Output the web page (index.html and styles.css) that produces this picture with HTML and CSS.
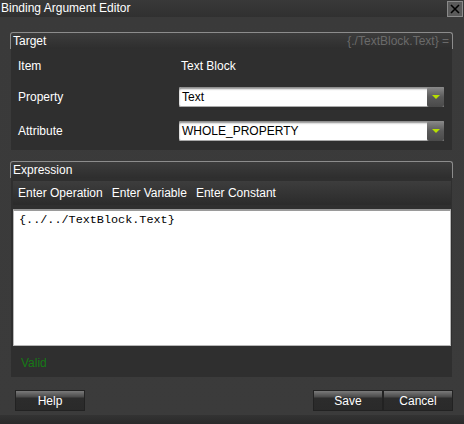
FILE: index.html
```html
<!DOCTYPE html>
<html>
<head>
<meta charset="utf-8">
<link rel="stylesheet" href="styles.css">
</head>
<body>
<div class="window">
  <div class="titlebar">
    <span class="title">Binding Argument Editor</span>
    <span class="close"><svg width="14" height="14" viewBox="0 0 14 14"><path d="M3 3 L11 11 M11 3 L3 11" stroke="#000" stroke-width="1.6" fill="none"/></svg></span>
  </div>
  <div class="content">
    <div class="group target">
      <div class="group-head">
        <span>Target</span>
        <span class="path">{./TextBlock.Text} =</span>
      </div>
      <div class="group-body target-body">
        <div class="row">
          <span class="label">Item</span>
          <span class="value">Text Block</span>
        </div>
        <div class="row">
          <span class="label">Property</span>
          <div class="combo"><span class="combo-text">Text</span><span class="combo-btn"><svg width="10" height="6" viewBox="0 0 10 6"><path d="M1 1 L9 1 L5 5 Z" fill="#b6e000"/></svg></span></div>
        </div>
        <div class="row">
          <span class="label">Attribute</span>
          <div class="combo"><span class="combo-text">WHOLE_PROPERTY</span><span class="combo-btn"><svg width="10" height="6" viewBox="0 0 10 6"><path d="M1 1 L9 1 L5 5 Z" fill="#b6e000"/></svg></span></div>
        </div>
      </div>
    </div>
    <div class="group expression">
      <div class="group-head">
        <span>Expression</span>
      </div>
      <div class="group-body expr-body">
        <div class="toolbar">
          <span class="tool">Enter Operation</span>
          <span class="tool">Enter Variable</span>
          <span class="tool">Enter Constant</span>
        </div>
        <div class="editor">{../../TextBlock.Text}</div>
        <div class="status">Valid</div>
      </div>
    </div>
    <div class="buttons">
      <span class="btn">Help</span>
      <span class="spacer"></span>
      <span class="btn">Save</span>
      <span class="btn">Cancel</span>
    </div>
  </div>
  <div class="bottom"></div>
</div>
</body>
</html>
```
FILE: styles.css
```css
html, body {
  margin: 0;
  padding: 0;
}
body {
  width: 464px;
  height: 424px;
  overflow: hidden;
  background: #3b3b3b;
  font-family: "Liberation Sans", Arial, sans-serif;
  font-size: 12px;
  color: #fff;
}
.window {
  width: 464px;
  height: 424px;
  display: flex;
  flex-direction: column;
  background: linear-gradient(#282828 0px, #2f2f2f 4px, #3a3a3a 12px, #3b3b3b 100%);
}
.titlebar {
  height: 17px;
  flex: none;
  display: flex;
  align-items: center;
  justify-content: space-between;
  background: linear-gradient(#393939, #303030);
  padding-left: 1px;
}
.title {
  line-height: 17px;
}
.close {
  width: 14px;
  height: 14px;
  margin-right: 1px;
  border: 1px solid #8a8a8a;
  background: #5a5a5a;
  display: flex;
}
.content {
  flex: 1;
  padding: 15px 11px 0 10px;
  display: flex;
  flex-direction: column;
}
.group-head {
  height: 16px;
  border: 1px solid #8c8c8c;
  border-bottom: none;
  border-radius: 3px 3px 0 0;
  background: linear-gradient(#3c3c3c, #2e2e2e);
  display: flex;
  align-items: center;
  justify-content: space-between;
  padding: 0 3px 0 2px;
  line-height: 16px;
}
.path {
  color: #6a6a6a;
}
.group-body {
  margin: 0 1px;
  background: #2f2f2f;
}
.target-body {
  height: 101px;
  padding-top: 7px;
  box-sizing: border-box;
  display: flex;
  flex-direction: column;
}
.row {
  display: flex;
  align-items: center;
  height: 20px;
  padding-left: 7px;
}
.row:nth-child(2) {
  margin-top: 11px;
}
.row:nth-child(3) {
  margin-top: 14px;
}
.label {
  width: 161px;
}
.value {
  padding-left: 2px;
}
.combo {
  width: 265px;
  height: 20px;
  display: flex;
  background: #fff;
  border-radius: 2px;
  box-shadow: inset 0 2px 2px #8a8a8a, inset 0 -1px 0 #aaa;
}
.combo-text {
  flex: 1;
  color: #000;
  line-height: 21px;
  padding-left: 3px;
}
.combo-btn {
  width: 17px;
  height: 20px;
  border-radius: 2px;
  background: linear-gradient(#8a8a8a, #5a5a5a 50%, #4a4a4a);
  display: flex;
  align-items: center;
  justify-content: center;
}
.expression {
  margin-top: 11px;
}
.expr-body {
  height: 199px;
  padding: 3px 1px 0 2px;
  box-sizing: border-box;
  display: flex;
  flex-direction: column;
}
.toolbar {
  height: 24px;
  background: linear-gradient(#3d3d3d, #2b2b2b);
  display: flex;
  align-items: center;
  padding-left: 5px;
  gap: 9px;
}
.editor {
  margin-top: 4px;
  height: 137px;
  box-sizing: border-box;
  background: #fff;
  border: 1px solid #b8b8b8;
  border-top: 2px solid #9a9a9a;
  color: #000;
  font-family: "Liberation Mono", "Courier New", monospace;
  font-size: 11.8px;
  padding: 2px 5px;
  line-height: 14px;
}
.status {
  color: #167a16;
  padding: 10px 0 0 8px;
}
.buttons {
  margin-top: 13px;
  display: flex;
  padding-left: 5px;
  padding-right: 0;
}
.spacer {
  flex: 1;
}
.btn {
  width: 70px;
  height: 21px;
  box-sizing: border-box;
  border: 1px solid #222;
  background: linear-gradient(#7a7a7a 0px, #4a4a4a 6px, #2c2c2c 7px, #2a2a2a 100%);
  text-align: center;
  line-height: 20px;
}
.bottom {
  height: 9px;
  flex: none;
  background: linear-gradient(#333, #2a2a2a);
}
```
